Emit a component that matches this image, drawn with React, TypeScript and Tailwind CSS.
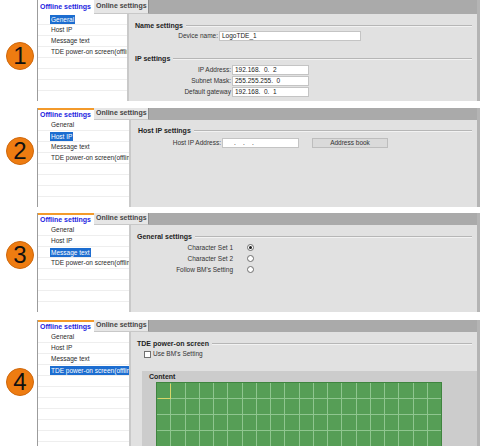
import type { ReactNode } from 'react';

const NAV_ITEMS = ['General', 'Host IP', 'Message text', 'TDE power-on screen(offline)'];

function Badge({ n, top }: { n: number; top: string }) {
  return (
    <div className={`w-[37px] shrink-0 pl-[6px] ${top}`}>
      <div className="w-[28px] h-[28px] rounded-full bg-[#ee7c11] border border-[#cf680c] flex items-center justify-center text-[24px] leading-none text-[#111] font-['Liberation_Sans',Arial,sans-serif]">
        {n}
      </div>
    </div>
  );
}

function SectionHeader({ title }: { title: string }) {
  return (
    <div className="flex items-center h-[9px] pr-[5px]">
      <span className="font-bold text-[7px] leading-[9px] text-[#1e1e1e] whitespace-nowrap">{title}</span>
      <div className="ml-[3px] flex-1 h-[2px] border-t border-[#b6b6b6] border-b border-b-[#f2f2f2]" />
    </div>
  );
}

function Field({ value, w }: { value: string; w: string }) {
  return (
    <div className={`${w} h-[10px] bg-white border border-[#c4c4c4] text-[6.5px] leading-[8px] pl-[2px] text-[#222] whitespace-pre`}>
      {value}
    </div>
  );
}

function Panel({
  active,
  height,
  tabH,
  listW,
  orange,
  children,
}: {
  active: number;
  height: string;
  tabH: string;
  listW: string;
  orange: boolean;
  children: ReactNode;
}) {
  return (
    <div className={`flex flex-col w-[443px] ${height} overflow-hidden border-l border-[#9c9c9c] border-r-[3px] border-r-[#b4b4b4]`}>
      <div className={`flex shrink-0 ${tabH} bg-[#aaaaaa]`}>
        <div
          className={`w-[56px] h-full bg-white pl-[2px] flex items-center font-bold text-[7px] text-[#1d1de0] whitespace-nowrap ${
            orange ? 'border-t-2 border-[#f39a2b]' : ''
          }`}
        >
          Offline settings
        </div>
        <div className="w-[55px] h-full bg-[#e6e6e6] border-r border-[#8e8e8e] border-b border-b-[#c8c8c8] pl-[2px] flex items-center font-bold text-[7px] text-[#454545] whitespace-nowrap">
          Online settings
        </div>
      </div>
      <div className="flex flex-1 min-h-0">
        <div className={`${listW} shrink-0 bg-white overflow-hidden`}>
          {Array.from({ length: 11 }).map((_, i) => (
            <div key={i} className="h-[11px] border-b border-[#eeeeee] pl-[12px] flex items-center text-[6.5px] text-[#2a2a2a] whitespace-nowrap">
              {NAV_ITEMS[i] &&
                (i === active ? (
                  <span className="bg-[#1c6dd0] text-white px-px leading-[9px]">{NAV_ITEMS[i]}</span>
                ) : (
                  <span className="px-px">{NAV_ITEMS[i]}</span>
                ))}
            </div>
          ))}
        </div>
        <div className="w-[2px] shrink-0 bg-[#c9c9c9]" />
        <div className="flex-1 bg-[#e1e1e1] flex flex-col min-w-0">{children}</div>
      </div>
    </div>
  );
}

function Radio({ checked }: { checked?: boolean }) {
  return (
    <div className="w-[7px] h-[7px] rounded-full bg-white border border-[#6e6e6e] flex items-center justify-center">
      {checked && <div className="w-[3px] h-[3px] rounded-full bg-[#1a1a1a]" />}
    </div>
  );
}

export default function App() {
  return (
    <div className="w-[484px] h-[446px] bg-white overflow-hidden flex flex-col font-['Liberation_Sans',Arial,sans-serif]">
      {/* 1 - General */}
      <div className="flex h-[101px] shrink-0">
        <Badge n={1} top="pt-[42px]" />
        <Panel active={0} height="h-[101px]" tabH="h-[14px]" listW="w-[89px]" orange={false}>
          <div className="pl-[6px] pt-[7px]">
            <SectionHeader title="Name settings" />
            <div className="flex items-center mt-[1px] h-[10px]">
              <span className="w-[84px] text-right text-[6.5px] text-[#333] pr-[1px]">Device name:</span>
              <Field value="LogoTDE_1" w="w-[142px]" />
            </div>
            <div className="mt-[13px]">
              <SectionHeader title="IP settings" />
            </div>
            <div className="flex flex-col mt-[1.5px]">
              {[
                ['IP Address:', '192.168.  0.  2'],
                ['Subnet Mask:', '255.255.255.  0'],
                ['Default gateway', '192.168.  0.  1'],
              ].map(([label, value]) => (
                <div key={label} className="flex items-center h-[11px]">
                  <span className="w-[97px] text-right text-[6.5px] text-[#333] pr-[1px]">{label}</span>
                  <Field value={value} w="w-[77px]" />
                </div>
              ))}
            </div>
          </div>
        </Panel>
      </div>

      {/* 2 - Host IP */}
      <div className="flex h-[99px] shrink-0 mt-[7px]">
        <Badge n={2} top="pt-[29px]" />
        <Panel active={1} height="h-[99px]" tabH="h-[12px]" listW="w-[91px]" orange>
          <div className="pl-[7px] pt-[6px]">
            <SectionHeader title="Host IP settings" />
            <div className="flex items-center mt-[2px] h-[11px]">
              <span className="w-[84px] text-right text-[6.5px] text-[#333] pr-[1px]">Host IP Address:</span>
              <Field value="     .    .    ." w="w-[77px]" />
              <div className="ml-[13px] w-[76px] h-[10px] bg-[#dadada] border border-[#bdbdbd] flex items-center justify-center text-[6.5px] text-[#333]">
                Address book
              </div>
            </div>
          </div>
        </Panel>
      </div>

      {/* 3 - Message text */}
      <div className="flex h-[99px] shrink-0 mt-[6px]">
        <Badge n={3} top="pt-[28px]" />
        <Panel active={2} height="h-[99px]" tabH="h-[12px]" listW="w-[91px]" orange>
          <div className="pl-[6px] pt-[7px]">
            <SectionHeader title="General settings" />
            <div className="flex flex-col mt-[1px]">
              {[
                ['Character Set 1', true],
                ['Character Set 2', false],
                ["Follow BM's Setting", false],
              ].map(([label, on]) => (
                <div key={label as string} className="flex items-center h-[11px]">
                  <span className="w-[96px] text-right text-[6.5px] text-[#333]">{label as string}</span>
                  <div className="ml-[14px]">
                    <Radio checked={on as boolean} />
                  </div>
                </div>
              ))}
            </div>
          </div>
        </Panel>
      </div>

      {/* 4 - TDE power-on screen */}
      <div className="flex h-[126px] shrink-0 mt-[8px]">
        <Badge n={4} top="pt-[48px]" />
        <Panel active={3} height="h-[126px]" tabH="h-[12px]" listW="w-[91px]" orange>
          <div className="pl-[6px] pt-[7px] flex flex-col flex-1 min-h-0">
            <SectionHeader title="TDE power-on screen" />
            <div className="flex items-center h-[10px] mt-px pl-[7px]">
              <div className="w-[7px] h-[7px] bg-white border border-[#707070]" />
              <span className="ml-[2px] text-[6.5px] text-[#333]">Use BM's Setting</span>
            </div>
            <div className="mt-[12px] ml-[5px] flex-1 bg-[#cccccc] pl-[7px] pt-px min-h-0">
              <div className="font-bold text-[7px] leading-[9px] text-[#1e1e1e]">Content</div>
              <div className="ml-[7px] mt-px w-[286px] border border-[#3f853f] bg-[#8fc68f] grid grid-cols-[repeat(20,minmax(0,1fr))] gap-px">
                {Array.from({ length: 80 }).map((_, i) => (
                  <div
                    key={i}
                    className={`h-[15px] bg-[#569e56] ${i === 0 ? 'shadow-[1px_1px_0_0_#d8d66a]' : ''}`}
                  />
                ))}
              </div>
            </div>
          </div>
        </Panel>
      </div>
    </div>
  );
}
